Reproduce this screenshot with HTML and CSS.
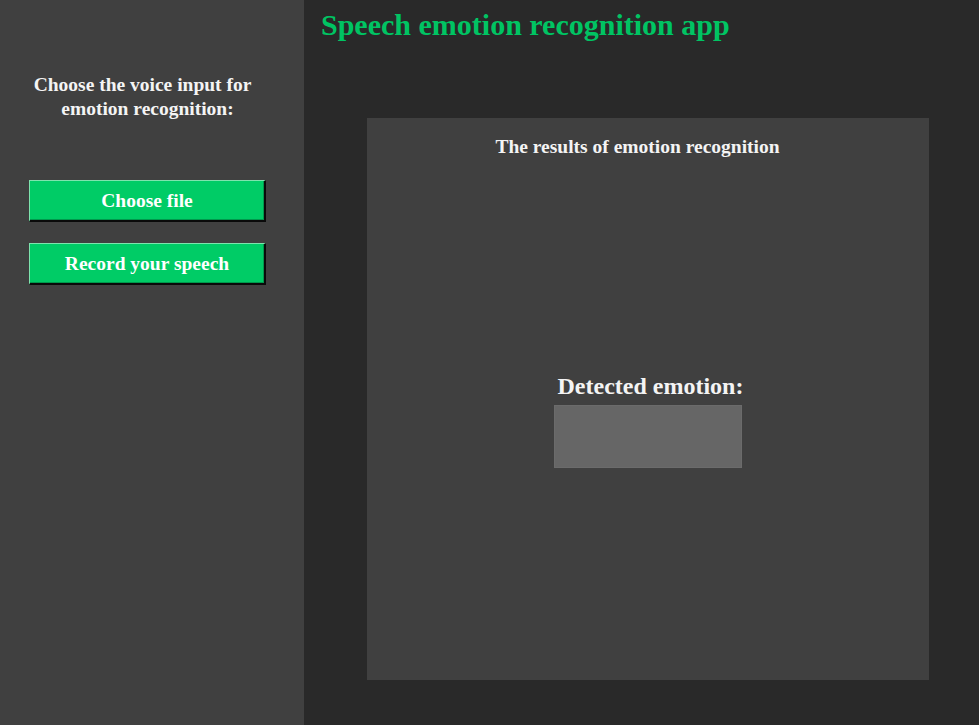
FILE: index.html
```html
<!DOCTYPE html>
<html>
<head>
<meta charset="utf-8">
<link rel="stylesheet" href="styles.css">
</head>
<body>
<div class="app">
  <aside class="sidebar">
    <div class="prompt"><span class="prompt-line prompt-line-first">Choose the voice input for</span><span class="prompt-line">emotion recognition:</span></div>
    <button class="btn btn-first">Choose file</button>
    <button class="btn">Record your speech</button>
  </aside>
  <main class="main">
    <h1 class="title">Speech emotion recognition app</h1>
    <section class="panel">
      <div class="panel-head">The results of emotion recognition</div>
      <div class="detected">
        <div class="detected-label">Detected emotion:</div>
        <div class="detected-box"></div>
      </div>
    </section>
  </main>
</div>
</body>
</html>
```

FILE: styles.css
```css
html, body {
  margin: 0;
  padding: 0;
  height: 100%;
  background: #292929;
  font-family: "Liberation Serif", "Times New Roman", serif;
  font-weight: bold;
  color: #ffffff;
}
.app {
  display: flex;
  height: 725px;
}
.sidebar {
  width: 304px;
  background: #404040;
  display: flex;
  flex-direction: column;
  align-items: flex-start;
  padding-left: 29px;
  box-sizing: border-box;
}
.prompt {
  width: 237px;
  margin-top: 73px;
  display: flex;
  flex-direction: column;
  align-items: center;
  font-size: 19.5px;
  line-height: 24px;
  white-space: nowrap;
  color: #f4f4f4;
}
.prompt-line {
  display: block;
}
.prompt-line-first {
  padding-right: 10px;
}
.btn {
  width: 237px;
  height: 42px;
  padding: 0;
  background: #00cc66;
  color: #ffffff;
  font-family: "Liberation Serif", "Times New Roman", serif;
  font-weight: bold;
  font-size: 19.5px;
  border-style: solid;
  border-width: 1px 2px 2px 1px;
  border-color: #7fe3ae #0a0a0a #0a0a0a #7fe3ae;
  box-shadow: inset -1px -1px 0 #00994d;
  margin-top: 21px;
}
.btn-first {
  margin-top: 59px;
}
.main {
  flex: 1;
  display: flex;
  flex-direction: column;
  padding-left: 17px;
}
.title {
  margin: 8px 0 0 0;
  font-size: 30px;
  line-height: 34px;
  color: #00c463;
}
.panel {
  width: 562px;
  height: 562px;
  margin-top: 76px;
  margin-left: 46px;
  background: #404040;
  display: flex;
  flex-direction: column;
  align-items: center;
}
.panel-head {
  margin-top: 17px;
  margin-right: 21px;
  font-size: 19.5px;
  line-height: 24px;
  color: #f4f4f4;
}
.detected {
  margin-top: 213px;
  display: flex;
  flex-direction: column;
  align-items: center;
}
.detected-label {
  font-size: 24px;
  line-height: 28px;
  margin-left: 5px;
  color: #f4f4f4;
}
.detected-box {
  width: 186px;
  height: 61px;
  margin-top: 5px;
  background: #666666;
  border: 1px solid #6b6b6b;
}
```
